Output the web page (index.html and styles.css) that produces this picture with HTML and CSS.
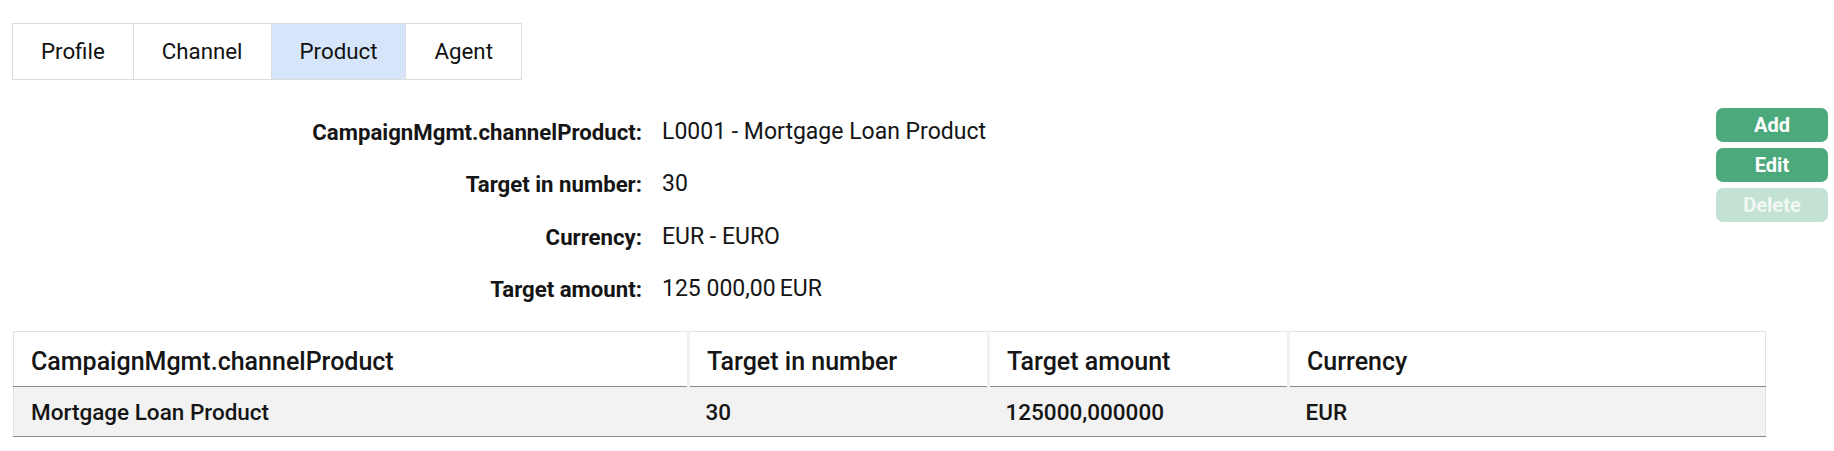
FILE: index.html
```html
<!DOCTYPE html>
<html lang="en">
<head>
<meta charset="utf-8">
<title>Campaign product</title>
<link rel="stylesheet" href="styles.css">
</head>
<body>
<div class="page">
  <nav class="tabs">
    <div class="tab">Profile</div>
    <div class="tab">Channel</div>
    <div class="tab active">Product</div>
    <div class="tab">Agent</div>
  </nav>

  <section class="detail">
    <dl class="fields">
      <dt>CampaignMgmt.channelProduct:</dt>
      <dd>L0001 - Mortgage Loan Product</dd>
      <dt>Target in number:</dt>
      <dd>30</dd>
      <dt>Currency:</dt>
      <dd>EUR - EURO</dd>
      <dt>Target amount:</dt>
      <dd>125 000,00<span class="cur">EUR</span></dd>
    </dl>
    <div class="actions">
      <button class="btn">Add</button>
      <button class="btn">Edit</button>
      <button class="btn disabled">Delete</button>
    </div>
  </section>

  <div class="table-wrap">
    <table class="grid">
      <colgroup>
        <col class="c1"><col class="c2"><col class="c3"><col>
      </colgroup>
      <thead>
        <tr>
          <th>CampaignMgmt.channelProduct</th>
          <th>Target in number</th>
          <th>Target amount</th>
          <th>Currency</th>
        </tr>
      </thead>
      <tbody>
        <tr>
          <td>Mortgage Loan Product</td>
          <td>30</td>
          <td>125000,000000</td>
          <td>EUR</td>
        </tr>
      </tbody>
    </table>
  </div>
</div>
</body>
</html>
```

FILE: styles.css
```css
html, body {
  margin: 0;
  padding: 0;
  background: #ffffff;
}

body {
  font-family: Roboto, "Noto Sans", sans-serif;
  color: #151515;
}

.page {
  padding: 23px 6px 0 12px;
}

/* Tabs */
.tabs {
  display: flex;
  width: fit-content;
  border: 1px solid #dcdcdc;
}

.tab {
  height: 55px;
  line-height: 55px;
  padding: 0 28px;
  font-size: 22.3px;
  color: #111;
  border-left: 1px solid #dcdcdc;
}

.tab:first-child {
  border-left: none;
}

.tab.active {
  background: #d7e5fb;
}

/* Detail */
.detail {
  display: flex;
  align-items: flex-start;
  justify-content: space-between;
  padding-top: 26px;
}

.fields {
  margin: 0;
  display: grid;
  grid-template-columns: 630px auto;
  column-gap: 20px;
  line-height: 52.3px;
}

.fields dt {
  text-align: right;
  font-weight: 700;
  font-size: 22.2px;
}

.fields dd {
  margin: 0;
  font-size: 23px;
  font-weight: 400;
}

.fields .cur {
  margin-left: 4px;
}

.actions {
  display: flex;
  flex-direction: column;
  gap: 6px;
  margin-top: 2px;
}

.btn {
  width: 112px;
  height: 34px;
  border: none;
  border-radius: 7px;
  background: #4ba97c;
  color: #fff;
  font-family: Roboto, sans-serif;
  font-weight: 700;
  font-size: 20px;
  padding: 0;
}

.btn.disabled {
  background: #c3e2d3;
  color: #f1f8f4;
}

/* Table */
.table-wrap {
  padding: 16px 62px 0 1px;
}

.grid {
  width: 100%;
  border-collapse: collapse;
  table-layout: fixed;
  border: 1px solid #e2e2e2;
}

.grid .c1 { width: 675px; }
.grid .c2 { width: 300px; }
.grid .c3 { width: 300px; }

.grid th {
  text-align: left;
  font-weight: 500;
  font-size: 25px;
  height: 55px;
  padding: 4px 0 0 17px;
  border-left: 3px solid #f1f1f1;
  border-bottom: 1px solid #8a8a8a;
  box-sizing: border-box;
}

.grid th:first-child {
  border-left: none;
}

.grid td {
  background: #f2f2f2;
  font-weight: 500;
  font-size: 22.5px;
  height: 50px;
  padding: 1px 0 0 17px;
  border-bottom: 1px solid #8a8a8a;
  box-sizing: border-box;
}
```
